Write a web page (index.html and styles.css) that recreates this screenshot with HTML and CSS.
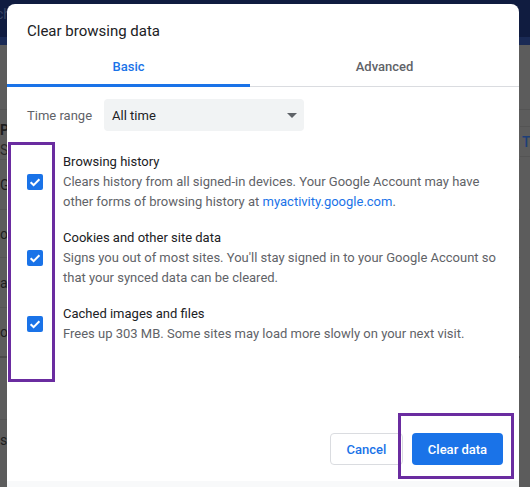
FILE: index.html
```html
<!DOCTYPE html>
<html>
<head>
<meta charset="utf-8">
<link rel="stylesheet" href="styles.css">
</head>
<body>
<div class="page">
  <div class="topbar"><span class="topbar-text">ch</span></div>
  <div class="strip"></div>
  <div class="content">
    <div class="left-col">
      <div class="row r1"></div>
      <div class="row r2"><span class="bold">P</span><br><span>S</span></div>
      <div class="row r3">G</div>
      <div class="row r4">o</div>
      <div class="row r5">a</div>
      <div class="row r6">o</div>
      <div class="row r7"></div>
      <div class="row r8">ss</div>
    </div>
    <div class="right-col">
      <div class="rrow rr1"></div>
      <div class="rrow rr2"></div>
      <div class="rrow rr3"><span class="blue">Tu</span></div>
    </div>
  </div>
</div>

<div class="dialog">
  <div class="dialog-main">
    <div class="title">Clear browsing data</div>
    <div class="tabs">
      <div class="tab active">Basic</div>
      <div class="tab">Advanced</div>
    </div>
    <div class="body">
      <div class="time-row">
        <span class="time-label">Time range</span>
        <div class="select">
          <span>All time</span>
          <svg class="arrow" width="10" height="5" viewBox="0 0 10 5"><path d="M0 0 L10 0 L5 5 Z" fill="#5f6368"/></svg>
        </div>
      </div>
      <div class="items">
        <div class="item">
          <span class="checkbox"><svg width="16" height="16" viewBox="0 0 16 16"><path d="M3.6 8.3 L6.6 11.1 L12.4 5.2" fill="none" stroke="#fff" stroke-width="2"/></svg></span>
          <div class="item-text">
            <div class="item-title">Browsing history</div>
            <div class="item-desc">Clears history from all signed-in devices. Your Google Account may have other forms of browsing history at <span class="link">myactivity.google.com</span>.</div>
          </div>
        </div>
        <div class="item">
          <span class="checkbox"><svg width="16" height="16" viewBox="0 0 16 16"><path d="M3.6 8.3 L6.6 11.1 L12.4 5.2" fill="none" stroke="#fff" stroke-width="2"/></svg></span>
          <div class="item-text">
            <div class="item-title">Cookies and other site data</div>
            <div class="item-desc">Signs you out of most sites. You'll stay signed in to your Google Account so that your synced data can be cleared.</div>
          </div>
        </div>
        <div class="item">
          <span class="checkbox"><svg width="16" height="16" viewBox="0 0 16 16"><path d="M3.6 8.3 L6.6 11.1 L12.4 5.2" fill="none" stroke="#fff" stroke-width="2"/></svg></span>
          <div class="item-text">
            <div class="item-title">Cached images and files</div>
            <div class="item-desc">Frees up 303 MB. Some sites may load more slowly on your next visit.</div>
          </div>
        </div>
      </div>
    </div>
    <div class="buttons">
      <button class="btn cancel">Cancel</button>
      <button class="btn primary">Clear data</button>
    </div>
  </div>
  <div class="dialog-footer"></div>
</div>

<div class="mark mark-checks"></div>
<div class="mark mark-button"></div>
</body>
</html>
```

FILE: styles.css
```css
html, body {
  margin: 0;
  padding: 0;
  width: 530px;
  height: 487px;
  overflow: hidden;
  font-family: Roboto, "Liberation Sans", sans-serif;
}

.page {
  width: 530px;
  height: 487px;
  background: #5c5c5c;
  display: flex;
  flex-direction: column;
}

.topbar {
  height: 37px;
  background: #101c40;
  color: #3a4666;
  font-size: 14px;
  line-height: 28px;
  overflow: hidden;
}

.topbar-text {
  display: inline-block;
  margin-left: -4px;
}

.strip {
  height: 8px;
  background: #1a2a55;
}

.content {
  flex: 1;
  display: grid;
  grid-template-columns: 1fr 10px;
}

.left-col {
  display: flex;
  flex-direction: column;
  color: #1e1e1e;
  font-size: 14px;
  overflow: hidden;
}

.row {
  border-bottom: 1px solid #545454;
  box-sizing: border-box;
  display: flex;
  flex-direction: column;
  justify-content: center;
  padding-left: 0;
  line-height: 20px;
}

.row.r1 { height: 65px; }
.row.r2 { height: 50px; display: block; padding-top: 10px; line-height: 20px; }
.row.r2 span { color: #2a2a2a; }
.row.r2 .bold { font-weight: 700; color: #1e1e1e; }
.row.r3 { height: 50px; }
.row.r4 { height: 48px; }
.row.r5 { height: 50px; }
.row.r6 { height: 50px; border-bottom: 2px solid #4a4a4a; }
.row.r7 { height: 62px; }
.row.r8 { height: 40px; border-bottom: none; }

.right-col {
  display: flex;
  flex-direction: column;
}

.rrow {
  border-bottom: 1px solid #545454;
  box-sizing: border-box;
  white-space: nowrap;
}

.rrow.rr1 { height: 65px; }
.rrow.rr2 { height: 17px; }
.rrow.rr3 { height: 30px; font-size: 14px; line-height: 30px; padding-left: 2px; }
.blue { color: #1d3f78; font-weight: 500; }

/* Dialog overlay */
.dialog {
  position: absolute;
  left: 7px;
  top: 4px;
  width: 512px;
  height: 500px;
  background: #fff;
  border-radius: 8px;
  display: flex;
  flex-direction: column;
  overflow: hidden;
}

.dialog-main {
  height: 477px;
  display: flex;
  flex-direction: column;
}

.dialog-footer {
  flex: 1;
  background: #f8f9fa;
}

.title {
  padding: 17px 20px 0 20px;
  font-size: 15px;
  line-height: 20px;
  color: #202124;
}

.tabs {
  margin-top: 7px;
  display: grid;
  grid-template-columns: 243px 1fr;
  border-bottom: 1px solid #dadce0;
}

.tab {
  height: 39px;
  margin-bottom: -1px;
  box-sizing: border-box;
  padding-top: 0;
  display: flex;
  align-items: center;
  justify-content: center;
  font-size: 13px;
  font-weight: 500;
  color: #5f6368;
  border-bottom: 3px solid transparent;
}

.tab.active {
  color: #1a73e8;
  border-bottom-color: #1a73e8;
}

.body {
  padding: 12px 20px 0 20px;
}

.time-row {
  display: flex;
  align-items: center;
  gap: 12px;
}

.time-label {
  font-size: 13px;
  color: #5f6368;
}

.select {
  width: 200px;
  height: 32px;
  box-sizing: border-box;
  background: #f1f3f4;
  border-radius: 4px;
  display: flex;
  align-items: center;
  justify-content: space-between;
  padding: 0 7px 0 8px;
  font-size: 13px;
  color: #202124;
}

.arrow {
  display: block;
}

.items {
  margin-top: 21px;
  display: flex;
  flex-direction: column;
  gap: 16px;
}

.item {
  display: flex;
  align-items: center;
  gap: 20px;
}

.checkbox {
  width: 16px;
  height: 16px;
  flex: none;
  background: #1a73e8;
  border-radius: 2px;
  display: block;
}

.checkbox svg { display: block; }

.item-text {
  width: 436px;
  font-size: 13px;
  line-height: 20px;
}

.item-title {
  color: #202124;
}

.item-desc {
  color: #5f6368;
}

.link {
  color: #1a73e8;
}

.buttons {
  margin-top: auto;
  padding: 0 16px 16px 0;
  display: flex;
  justify-content: flex-end;
  gap: 9px;
}

.btn {
  height: 32px;
  box-sizing: border-box;
  border-radius: 4px;
  font-family: Roboto, "Liberation Sans", sans-serif;
  font-size: 13px;
  font-weight: 500;
  padding: 0 15px;
  cursor: pointer;
}

.btn.cancel {
  width: 73px;
  background: #fff;
  color: #1a73e8;
  border: 1px solid #dadce0;
}

.btn.primary {
  width: 91px;
  background: #1a73e8;
  color: #fff;
  border: none;
}

/* Annotation marks */
.mark {
  position: absolute;
  border: 3px solid #6a2ca0;
  box-sizing: border-box;
}

.mark-checks {
  left: 8px;
  top: 142px;
  width: 47px;
  height: 240px;
}

.mark-button {
  left: 398px;
  top: 413px;
  width: 116px;
  height: 66px;
}
```
